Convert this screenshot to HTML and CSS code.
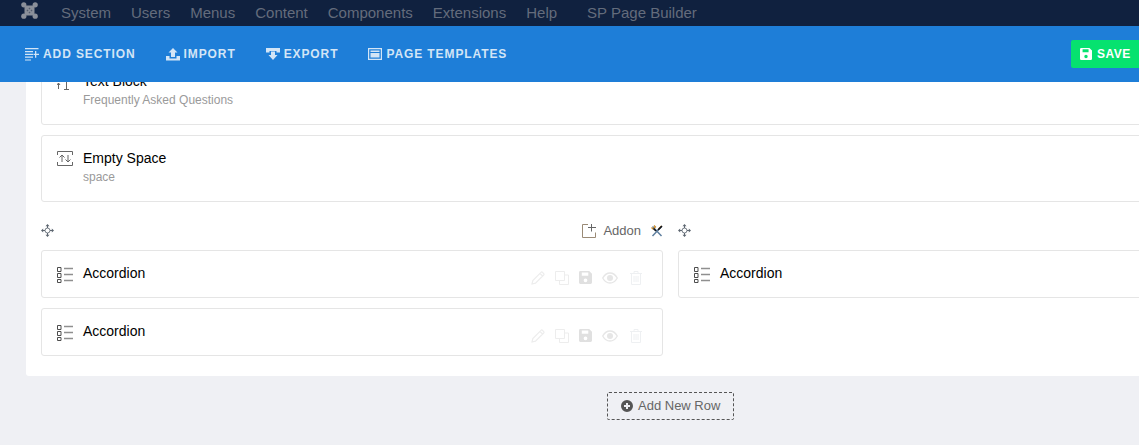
FILE: index.html
```html
<!DOCTYPE html>
<html lang="en">
<head>
<meta charset="utf-8">
<title>SP Page Builder</title>
<link rel="stylesheet" href="styles.css">
</head>
<body>
<svg class="sprites" width="0" height="0" aria-hidden="true">
  <symbol id="list" viewBox="0 0 16 16">
    <path d="M.5.500h3.500v4H.5zM.5 6.500h3.500v4H.5zM.5 12.500h3.500v3H.5z" fill="none" stroke="#4d4d4d"/>
    <path d="M7 1.500h9M7 7.500h9M7 13.500h9" fill="none" stroke="#8f8f8f" stroke-width="1.300"/>
  </symbol>
  <symbol id="move" viewBox="0 0 13 13">
    <circle cx="6.500" cy="6.500" r="2.500" fill="none" stroke="currentColor" stroke-width=".9"/>
    <path d="M6.500 1v3M6.500 9v3M1 6.500h3M9 6.500h3" stroke="currentColor"/>
    <path d="M6.500 0l-2 2.200h4zM6.500 13l-2-2.200h4zM0 6.500l2.200-2v4zM13 6.500l-2.200-2v4z" fill="currentColor"/>
  </symbol>
  <symbol id="pencil" viewBox="0 0 14 14">
    <path d="M1 13l.8-3.500L10 1.300a1 1 0 0 1 1.400 0l1.300 1.300a1 1 0 0 1 0 1.400L4.500 12.200zM9 2.500l2.500 2.500" fill="none" stroke="currentColor" stroke-width="1.200"/>
  </symbol>
  <symbol id="copy" viewBox="0 0 14 14">
    <path d="M.5.500h9v9h-9zM10 4h3.500v9.500h-9V10" fill="none" stroke="currentColor"/>
  </symbol>
  <symbol id="save" viewBox="0 0 14 14">
    <path fill-rule="evenodd" d="M1.500 0H11l3 3v9.500a1.500 1.500 0 0 1-1.500 1.500h-11A1.500 1.500 0 0 1 0 12.500v-11A1.500 1.500 0 0 1 1.500 0zM3 1.500V5h7V1.500zM7 8a2 2 0 1 0 0 4 2 2 0 0 0 0-4z" fill="currentColor"/>
  </symbol>
  <symbol id="eye" viewBox="0 0 16 12">
    <path d="M.7 6C2.500 2.800 5 1 8 1s5.500 1.800 7.300 5C13.500 9.200 11 11 8 11S2.500 9.200.7 6z" fill="none" stroke="currentColor" stroke-width="1.300"/>
    <circle cx="8" cy="6" r="3" fill="currentColor"/>
  </symbol>
  <symbol id="trash" viewBox="0 0 12 14">
    <path d="M0 2.500h12M4 2.500V.5h4v2M1.500 2.500v11h9v-11M4 5v6M6 5v6M8 5v6" fill="none" stroke="currentColor"/>
  </symbol>
</svg>

<nav class="topnav">
  <svg class="joomla" viewBox="0 0 17 17" aria-hidden="true">
    <path d="M4 3.500h9l.5.500v9l-.5.500H4l-.5-.500V4z" fill="#8a8f99"/>
    <circle cx="2.800" cy="2.800" r="2.600" fill="#8a8f99"/>
    <circle cx="14.200" cy="2.800" r="2.600" fill="#8a8f99"/>
    <circle cx="2.800" cy="14.200" r="2.600" fill="#8a8f99"/>
    <circle cx="14.200" cy="14.200" r="2.600" fill="#8a8f99"/>
    <path d="M8.500 5.500l1 1-1 1-1-1zM5.500 8.500l1-1 1 1-1 1zM11.500 8.500l-1-1-1 1 1 1zM8.500 11.500l1-1-1-1-1 1z" fill="#555d6e"/>
  </svg>
  <a class="nav-link">System</a>
  <a class="nav-link">Users</a>
  <a class="nav-link">Menus</a>
  <a class="nav-link">Content</a>
  <a class="nav-link">Components</a>
  <a class="nav-link">Extensions</a>
  <a class="nav-link">Help</a>
  <a class="nav-link nav-link-sp">SP Page Builder</a>
</nav>

<header class="toolbar">
  <a class="tool">
    <svg class="tool-icon" viewBox="0 0 14 14" aria-hidden="true"><path d="M0 1h13.500v1.300H0zM0 4h8v1.200H0zM0 6.800h8V8H0zM0 9.600h8v1.200H0zM0 12.400h6v1.200H0zM10 4h1.300v2.700H14V8h-2.700v2.700H10V8H8.500V6.700H10z" fill="currentColor"/></svg>
    ADD SECTION
  </a>
  <a class="tool">
    <svg class="tool-icon" viewBox="0 0 14 14" aria-hidden="true"><path d="M7 1l4.500 4.500H9V10H5V5.500H2.500zM0 9h3.500v2.500h7V9H14v4.500H0z" fill="currentColor"/></svg>
    IMPORT
  </a>
  <a class="tool">
    <svg class="tool-icon" viewBox="0 0 14 14" aria-hidden="true"><path d="M0 1h14v4.500h-3.500V4h-7v1.500H0zM5 4.500h4V8h2.500L7 13 2.500 8H5z" fill="currentColor"/></svg>
    EXPORT
  </a>
  <a class="tool">
    <svg class="tool-icon" viewBox="0 0 14 14" aria-hidden="true"><path fill-rule="evenodd" d="M0 1h14v12H0zM1.200 2.200v9.600h11.600V2.200zM2.500 3.500h9V5h-9zM2.500 6h9v4.500h-9z" fill="currentColor"/></svg>
    PAGE TEMPLATES
  </a>
  <a class="save">
    <svg class="save-icon"><use href="#save"/></svg>
    SAVE
  </a>
</header>

<main class="page">
  <section class="panel">
    <div class="addon">
      <svg class="addon-icon" viewBox="0 0 16 16" aria-hidden="true"><path d="M9.500 2v13.500M7 15.500h5M1.500 15V9M1.500 9L0 11M1.500 9l1.500 2" fill="none" stroke="currentColor"/></svg>
      <div>
        <div class="addon-name">Text Block</div>
        <div class="addon-sub">Frequently Asked Questions</div>
      </div>
    </div>
    <div class="addon">
      <svg class="addon-icon" viewBox="0 0 16 16" aria-hidden="true"><path d="M.5 4V.5h15V4M.5 11v3.500h15V11M5 11V4M5 4L2.500 6.500M5 4l2.500 2.500M11 4v7M11 11L8.500 8.500M11 11l2.500-2.500" fill="none" stroke="currentColor"/></svg>
      <div>
        <div class="addon-name">Empty Space</div>
        <div class="addon-sub">space</div>
      </div>
    </div>

    <div class="columns">
      <div class="column">
        <div class="column-bar">
          <svg class="move"><use href="#move"/></svg>
          <div class="column-tools">
            <svg class="addon-add" viewBox="0 0 14 14" aria-hidden="true"><path d="M6 .5H.5v13h13V8.500" fill="none" stroke="#9a8a76"/><path d="M9.500 0v7.500M6 3.500h8" fill="none" stroke="#666"/></svg>
            <span class="addon-label">Addon</span>
            <svg class="wrench" viewBox="0 0 12 12" aria-hidden="true"><path d="M1.500 1.500l9 9.500M10.500 1.500L1.500 11" stroke="#5f7f9f" stroke-width="1.500"/><path d="M.5 2.500L2 4 4.500 2 3 .5M7.500 4l3-3" fill="none" stroke="#c98a2a" stroke-width="1.200"/><path d="M2.500 3.500L5 6M7 5l4-4" stroke="#10141c" stroke-width="1.700"/></svg>
          </div>
        </div>
        <div class="addon addon-row">
          <svg class="addon-icon"><use href="#list"/></svg>
          <div class="addon-name">Accordion</div>
          <div class="actions">
            <svg class="act"><use href="#pencil"/></svg>
            <svg class="act"><use href="#copy"/></svg>
            <svg class="act act-save"><use href="#save"/></svg>
            <svg class="act act-eye"><use href="#eye"/></svg>
            <svg class="act act-trash"><use href="#trash"/></svg>
          </div>
        </div>
        <div class="addon addon-row">
          <svg class="addon-icon"><use href="#list"/></svg>
          <div class="addon-name">Accordion</div>
          <div class="actions">
            <svg class="act"><use href="#pencil"/></svg>
            <svg class="act"><use href="#copy"/></svg>
            <svg class="act act-save"><use href="#save"/></svg>
            <svg class="act act-eye"><use href="#eye"/></svg>
            <svg class="act act-trash"><use href="#trash"/></svg>
          </div>
        </div>
      </div>
      <div class="column">
        <div class="column-bar">
          <svg class="move"><use href="#move"/></svg>
        </div>
        <div class="addon addon-row">
          <svg class="addon-icon"><use href="#list"/></svg>
          <div class="addon-name">Accordion</div>
        </div>
      </div>
    </div>
  </section>

  <div class="add-row-wrap">
    <a class="add-row">
      <svg class="plus" viewBox="0 0 12 12" aria-hidden="true"><path fill-rule="evenodd" d="M6 0a6 6 0 1 1 0 12A6 6 0 0 1 6 0zM5 3v2H3v2h2v2h2V7h2V5H7V3z" fill="currentColor"/></svg>
      <span class="add-row-label">Add New Row</span>
    </a>
  </div>
</main>
</body>
</html>
```

FILE: styles.css
```css
* { box-sizing: border-box; }

html, body {
  margin: 0;
  height: 445px;
  overflow: hidden;
}

body {
  width: 1139px;
  background: #eff0f4;
  font-family: "Liberation Sans", Arial, sans-serif;
  color: #000;
}

.sprites { position: absolute; }

.topnav {
  height: 26px;
  background: #10213f;
  display: flex;
  align-items: center;
  padding-left: 21px;
  color: #646c7c;
  font-size: 15px;
  position: relative;
  z-index: 3;
}

.joomla { width: 17px; height: 17px; margin-right: 23px; margin-top: -5px; }
.nav-link { margin-right: 20px; white-space: nowrap; margin-top: -2px; }
.nav-link-sp { margin-left: 10px; }

.toolbar {
  height: 56px;
  background: #1e7ed8;
  display: flex;
  align-items: center;
  padding-left: 25px;
  position: relative;
  z-index: 2;
  color: #d3e5f6;
  font-size: 12px;
  font-weight: 700;
  letter-spacing: .9px;
}

.tool { display: flex; align-items: center; margin-right: 30px; white-space: nowrap; margin-top: -1px; }
.tool-icon { width: 14px; height: 14px; margin-right: 4px; }

.save {
  margin-left: auto;
  width: 68px;
  height: 28px;
  background: #06e26f;
  color: #fff;
  border-radius: 2px 0 0 2px;
  display: flex;
  align-items: center;
  padding-left: 9px;
  font-size: 12px;
  letter-spacing: .5px;
}
.save-icon { width: 12px; height: 12px; margin-right: 5px; }

.page { margin-top: -24px; }

.panel {
  margin-left: 26px;
  width: 1300px;
  height: 318px;
  background: #fff;
  padding: 0 15px;
  border-radius: 3px;
}

.addon {
  display: flex;
  width: 1260px;
  height: 67px;
  border: 1px solid #e5e5e5;
  border-radius: 3px;
  padding: 13px 15px;
  margin-bottom: 10px;
  background: #fff;
}

.addon-icon { width: 16px; height: 16px; margin: 2px 10px 0 0; color: #666; flex: none; }
.addon-name { font-size: 14px; line-height: 18px; }
.addon-sub { font-size: 12px; line-height: 14px; color: #9a9a9a; margin-top: 3px; }

.columns {
  display: grid;
  grid-template-columns: 622px 622px;
  column-gap: 15px;
  margin-top: 13px;
}

.column-bar {
  height: 35px;
  display: flex;
  justify-content: space-between;
  padding-top: 9px;
}

.move { width: 13px; height: 13px; color: #5d6670; }

.column-tools { display: flex; align-items: flex-start; }
.addon-add { width: 14px; height: 14px; }
.addon-label { font-size: 13px; line-height: 14px; color: #666; margin: 0 10px 0 7px; }
.wrench { width: 12px; height: 12px; margin-top: 1px; }

.addon-row {
  width: 100%;
  height: 48px;
  align-items: center;
  padding: 0 15px;
}
.addon-row .addon-icon { margin-top: 1px; }
.addon-row .addon-name { margin-top: -2px; }

.actions {
  margin-left: auto;
  margin-right: 5px;
  display: flex;
  align-items: center;
  gap: 10px;
  margin-top: 7px;
  color: #ededed;
}
.act { width: 14px; height: 14px; }
.act-save { width: 13px; height: 13px; color: #e0e0e0; }
.act-eye { width: 16px; height: 12px; color: #e6e6e6; }
.act-trash { width: 12px; height: 14px; margin-left: 2px; color: #eef0f2; }

.add-row-wrap {
  display: flex;
  padding: 16px 0 0 607px;
}

.add-row {
  width: 127px;
  height: 28px;
  border: 1px dashed #555;
  border-radius: 2px;
  display: flex;
  align-items: center;
  padding-left: 13px;
  color: #666;
  font-size: 13px;
  white-space: nowrap;
}
.add-row-label { margin-top: -2px; }
.plus { width: 12px; height: 12px; margin-right: 5px; color: #555; }
```
